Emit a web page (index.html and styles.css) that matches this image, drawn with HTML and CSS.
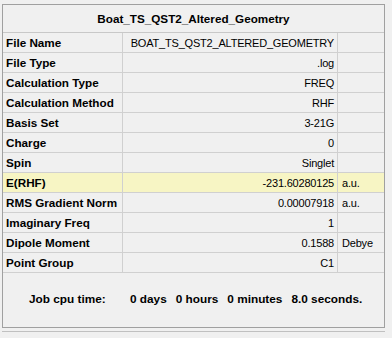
FILE: index.html
```html
<!DOCTYPE html>
<html>
<head>
<meta charset="utf-8">
<link rel="stylesheet" href="styles.css">
</head>
<body>
<div class="panel">
  <div class="title">Boat_TS_QST2_Altered_Geometry</div>
  <div class="grid">
    <div class="row"><div class="lbl">File Name</div><div class="val">BOAT_TS_QST2_ALTERED_GEOMETRY</div><div class="unit"></div></div>
    <div class="row"><div class="lbl">File Type</div><div class="val">.log</div><div class="unit"></div></div>
    <div class="row"><div class="lbl">Calculation Type</div><div class="val">FREQ</div><div class="unit"></div></div>
    <div class="row"><div class="lbl">Calculation Method</div><div class="val">RHF</div><div class="unit"></div></div>
    <div class="row"><div class="lbl">Basis Set</div><div class="val">3-21G</div><div class="unit"></div></div>
    <div class="row"><div class="lbl">Charge</div><div class="val">0</div><div class="unit"></div></div>
    <div class="row"><div class="lbl">Spin</div><div class="val">Singlet</div><div class="unit"></div></div>
    <div class="row hl"><div class="lbl">E(RHF)</div><div class="val">-231.60280125</div><div class="unit">a.u.</div></div>
    <div class="row"><div class="lbl">RMS Gradient Norm</div><div class="val">0.00007918</div><div class="unit">a.u.</div></div>
    <div class="row"><div class="lbl">Imaginary Freq</div><div class="val">1</div><div class="unit"></div></div>
    <div class="row"><div class="lbl">Dipole Moment</div><div class="val">0.1588</div><div class="unit">Debye</div></div>
    <div class="row"><div class="lbl">Point Group</div><div class="val">C1</div><div class="unit"></div></div>
  </div>
  <div class="job">
    <span class="jl">Job cpu time:</span>
    <span class="jv">
      <span>0 days</span><span>0 hours</span><span>0 minutes</span><span>8.0 seconds.</span>
    </span>
  </div>
</div>
<div class="bottom"></div>
</body>
</html>
```
FILE: styles.css
```css
html, body {
  margin: 0;
  padding: 0;
  background: #f0f0f0;
  width: 392px;
  height: 338px;
  overflow: hidden;
  font-family: "Liberation Sans", Arial, sans-serif;
  font-size: 11px;
  color: #000;
}
.panel {
  margin: 4px 0 0 2px;
  width: 381px;
  border: 1px solid #a0a0a0;
  border-bottom: none;
  background: #f0f0f0;
}
.title {
  height: 28px;
  line-height: 27px;
  text-align: center;
  font-weight: bold;
  font-size: 11.7px;
  border-bottom: 1px solid #c8c8c8;
  box-sizing: border-box;
}
.grid {
  display: flex;
  flex-direction: column;
}
.row {
  display: grid;
  grid-template-columns: 120px 215px 1fr;
  height: 20px;
  box-sizing: border-box;
  border-bottom: 1px solid #d0d0d0;
}
.row.hl {
  background: #f7f5c4;
}
.lbl {
  font-weight: bold;
  font-size: 11.7px;
  padding-left: 3px;
  padding-top: 1px;
  line-height: 18px;
  border-right: 1px solid #d0d0d0;
  white-space: nowrap;
}
.val {
  text-align: right;
  padding-right: 3px;
  padding-top: 1px;
  line-height: 18px;
  letter-spacing: -0.2px;
  border-right: 1px solid #d0d0d0;
  white-space: nowrap;
}
.unit {
  padding-left: 4px;
  padding-top: 1px;
  line-height: 18px;
  letter-spacing: -0.2px;
}
.job {
  height: 55px;
  display: flex;
  align-items: center;
  font-weight: bold;
  font-size: 11.8px;
  border-bottom: 1px solid #a0a0a0;
  box-sizing: border-box;
  padding-bottom: 2px;
}
.jl {
  margin-left: 26px;
  width: 101px;
  white-space: nowrap;
}
.jv {
  display: flex;
  gap: 9px;
  white-space: nowrap;
}
.bottom {
  margin-left: 2px;
  width: 383px;
  height: 3px;
  border-bottom: 1px solid #c0c0c0;
}
```
